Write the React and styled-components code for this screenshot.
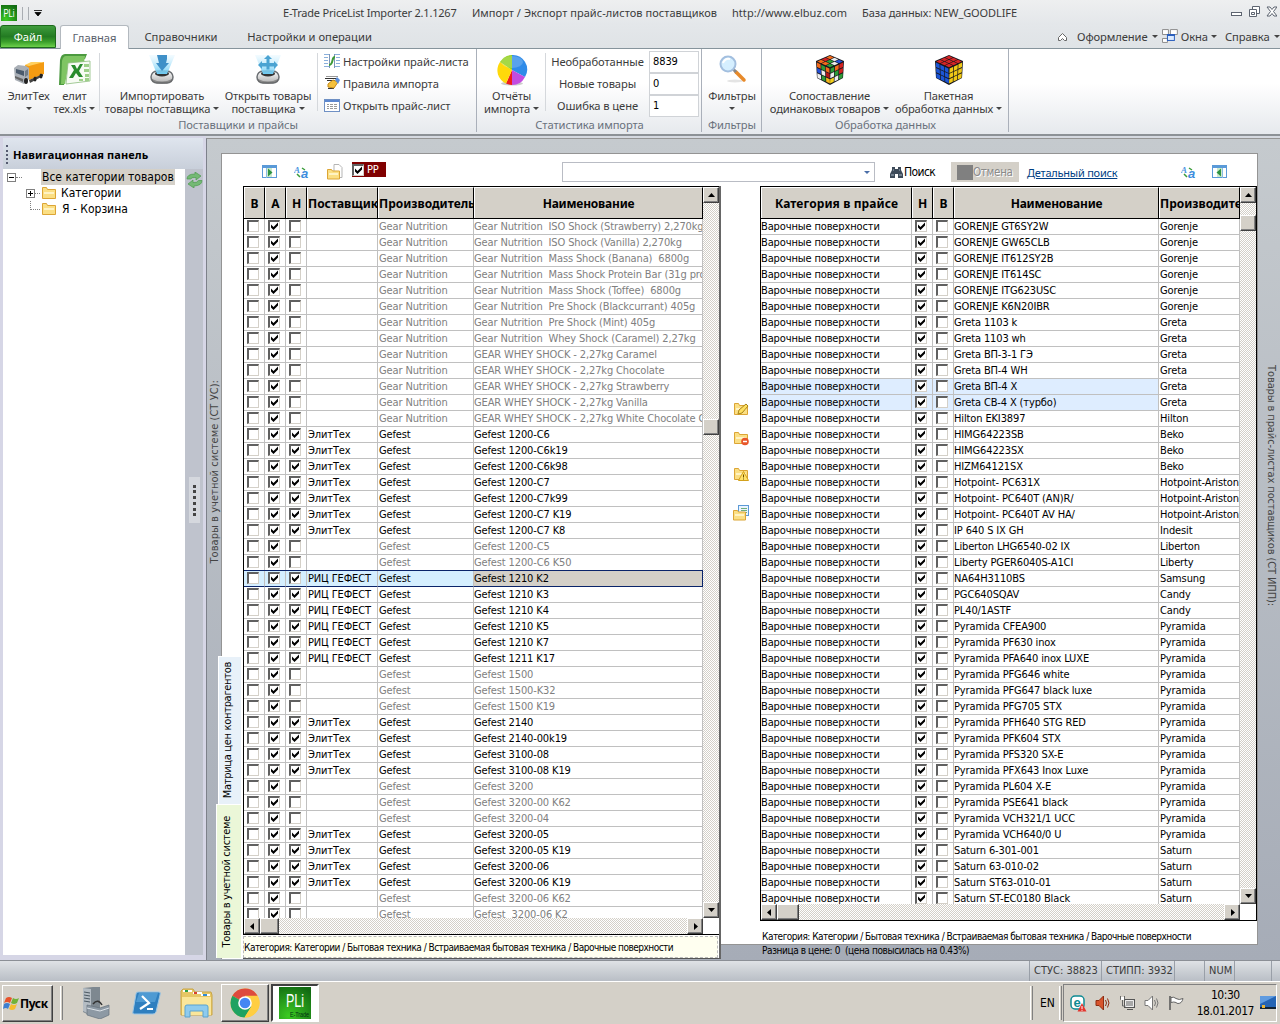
import React from 'react';
import styled, { createGlobalStyle, css } from 'styled-components';

const GlobalStyle = createGlobalStyle`
  * {
    box-sizing: border-box;
  }

  body {
    margin: 0;
    overflow: hidden;
  }
`;

const ui = "'Noto Sans', 'Open Sans', sans-serif";
const tahoma = "'DejaVu Sans Condensed', 'DejaVu Sans', sans-serif";

const Window = styled.div`
  background: #d4d0c8;
  color: #3b3b3b;
  display: flex;
  flex-direction: column;
  font-family: ${ui};
  font-size: 11.2px;
  height: 1024px;
  letter-spacing: -0.1px;
  white-space: pre;
  width: 1280px;
`;

/* ---------- title and tabs ---------- */

const TitleBar = styled.header`
  align-items: center;
  background: linear-gradient(#eeeff0, #e4e7ea);
  display: flex;
  flex: 0 0 24px;
  padding: 0 3px 0 1px;
`;

const QuickAccess = styled.div`
  align-items: center;
  display: flex;
  gap: 5px;
  padding-top: 2px;
  width: 282px;
`;

const Bar = styled.i`
  background: #a9adb2;
  height: 13px;
  width: 1px;
`;

const TitleText = styled.span`
  flex: none;
  font-size: 11px;
  letter-spacing: ${(p) => p.$spacing || 0}px;
  width: ${(p) => p.$width}px;
`;

const WindowButtons = styled.div`
  display: flex;
  gap: 6px;
  margin-left: auto;
`;

const TabBar = styled.nav`
  align-items: flex-end;
  background: linear-gradient(#e4e7ea, #dfe3e6);
  border-bottom: 1px solid #86949c;
  display: flex;
  flex: 0 0 25px;
`;

const FileTab = styled.div`
  background: linear-gradient(#3f9c3d, #237b22 50%, #3a9f2b 75%, #6cd14b);
  border: 1px solid #1d6a1c;
  border-radius: 3px 3px 0 0;
  color: #fff;
  height: 23px;
  line-height: 22px;
  text-align: center;
  width: 56px;
`;

const Tab = styled.div`
  height: 23px;
  letter-spacing: 0;
  line-height: 23px;
  margin-left: ${(p) => p.$gap}px;
  text-align: center;
  width: ${(p) => p.$width}px;
  ${(p) =>
    p.$active &&
    css`
      background: #fff;
      border: 1px solid #b3b9bf;
      border-bottom: 0;
      border-radius: 3px 3px 0 0;
      color: #5a626c;
      height: 24px;
      margin-bottom: -1px;
    `}
`;

const TabMenu = styled.div`
  align-items: center;
  display: flex;
  height: 23px;
  margin-left: auto;
  padding-right: 2px;
`;

const MenuItem = styled.span`
  align-items: center;
  display: flex;
  gap: ${(p) => p.$gap || 4}px;
  justify-content: space-between;
  margin-left: ${(p) => p.$left}px;
  width: ${(p) => p.$width}px;
`;

const Caret = styled.i`
  border: solid transparent;
  border-top-color: #444;
  border-width: 3.5px 3px 0;
  display: inline-block;
  vertical-align: middle;
`;

/* ---------- ribbon ---------- */

const Ribbon = styled.section`
  background: linear-gradient(#fff 40%, #e6e9ed);
  border-bottom: 2px solid #8c9196;
  display: flex;
  flex: 0 0 87px;
  min-height: 0;
`;

const Group = styled.div`
  border-right: 1px solid #aab0ba;
  display: flex;
  flex-direction: column;
  margin: 0 1px 2px 0;
  width: ${(p) => p.$width}px;
`;

const GroupBody = styled.div`
  display: flex;
  flex: 0 0 67px;
  min-height: 0;
  padding-left: ${(p) => p.$left || 0}px;
`;

const GroupLabel = styled.div`
  color: #69717c;
  height: 16px;
  line-height: 18px;
  text-align: center;
`;

const BigButton = styled.div`
  align-items: center;
  display: flex;
  flex: none;
  flex-direction: column;
  line-height: 13px;
  padding-top: 5px;
  text-align: center;
  width: ${(p) => p.$width}px;

  svg {
    height: 32px;
    margin-bottom: 3px;
    width: 32px;
  }
`;

const ButtonLine = styled.span`
  align-items: center;
  display: flex;
  gap: 3px;
  height: 13px;
  letter-spacing: -0.15px;
`;

const Divider = styled.i`
  background: #d5d8dc;
  height: 58px;
  margin: 4px ${(p) => p.$right || 0}px 0 ${(p) => p.$left || 0}px;
  width: 1px;
`;

const SmallButtons = styled.div`
  display: flex;
  flex-direction: column;
  padding-top: 1px;
`;

const SmallButton = styled.div`
  align-items: center;
  display: flex;
  flex: none;
  gap: 3px;
  height: 22px;
`;

const StatLabels = styled.div`
  line-height: 22px;
  padding-top: 2px;
  text-align: center;
  width: 103px;
`;

const StatFields = styled.div`
  padding-top: 2px;
`;

const StatField = styled.div`
  background: #fff;
  border: 1px solid #d0d3d7;
  color: #000;
  font: 11px/19px ${tahoma};
  height: 22px;
  padding-left: 3px;
  width: 50px;
`;

/* ---------- navigation ---------- */

const Content = styled.main`
  background: #d5d9e0;
  display: flex;
  flex: 0 0 824px;
`;

const NavPanel = styled.aside`
  background: #d6d6e6;
  display: flex;
  flex-direction: column;
  padding: 2px 3px 5px;
  width: 206px;
`;

const NavHeader = styled.div`
  align-items: center;
  background: linear-gradient(#dfe5ee, #c8cfda);
  color: #000;
  display: flex;
  flex: 0 0 31px;
  font: bold 11px ${ui};
  gap: 5px;
  letter-spacing: 0.1px;
  padding: 2px 0 0 3px;
`;

const Grip = styled.i`
  border-left: 2px dotted #555a70;
  height: 19px;
`;

const NavBody = styled.div`
  background: #bfc3cd;
  display: flex;
  flex: 1;
`;

const Tree = styled.div`
  background: #fff;
  color: #000;
  font: 12px/16px ${tahoma};
  width: 182px;
`;

const TreeRow = styled.div`
  align-items: center;
  display: flex;
  height: 16px;
  padding-left: ${(p) => p.$indent}px;
`;

const Expander = styled.svg`
  height: 9px;
  width: 9px;
`;

const Dots = styled.i`
  border-top: 1px dotted #808080;
  margin-right: ${(p) => p.$right}px;
  width: ${(p) => p.$width}px;
`;

const Elbow = styled.i`
  align-self: flex-start;
  border: dotted #808080;
  border-width: 0 0 1px 1px;
  height: 9px;
  margin: 0 1px 0 4px;
  width: 10px;
`;

const TreeLabel = styled.span`
  background: ${(p) => (p.$selected ? '#d4d0c8' : 'none')};
  letter-spacing: 0;
  margin-left: ${(p) => p.$left}px;
  padding: 0 1px;
`;

const NavTools = styled.div`
  align-items: center;
  display: flex;
  flex-direction: column;
  padding-top: 3px;
  width: 18px;
`;

const SplitHandle = styled.div`
  align-items: center;
  background: #d5d8de;
  display: flex;
  height: 46px;
  justify-content: center;
  margin-top: 289px;
  width: 11px;

  i {
    border-left: 3px dotted #444;
    height: 31px;
  }
`;

/* ---------- workspace ---------- */

const Workspace = styled.div`
  background: linear-gradient(#c5cace, #a6acb7);
  border-left: 1px solid #7d818a;
  border-top: 1px solid #949494;
  display: flex;
  flex: 1;
  margin-top: 2px;
`;

const SideLabel = styled.div`
  align-items: center;
  color: #444;
  display: flex;
  flex: 0 0 ${(p) => p.$width}px;
  font: 11px ${tahoma};
  letter-spacing: ${(p) => p.$spacing}px;
  padding-top: ${(p) => p.$top}px;
  writing-mode: vertical-rl;

  span {
    transform: ${(p) => (p.$up ? 'rotate(180deg)' : 'none')};
  }
`;

const Page = styled.div`
  display: flex;
  flex: 0 0 1037px;
  flex-direction: column;
  padding-top: 14px;
`;

const Tools = styled.div`
  align-items: center;
  background: #fff;
  border: 1px solid #949494;
  border-bottom: 0;
  color: #000;
  display: flex;
  flex: 0 0 33px;
  font: 12px ${tahoma};
  padding: 4px 0 0 40px;
`;

const Tool = styled.span`
  align-items: center;
  display: flex;
  flex: none;
  gap: 1px;
  height: 16px;
  letter-spacing: -0.6px;
  margin-left: ${(p) => p.$left}px;
  width: ${(p) => p.$width || 16}px;

  svg {
    flex: none;
  }
`;

const PpFlag = styled.div`
  align-items: center;
  align-self: flex-start;
  background: #800000;
  color: #fff;
  display: flex;
  font-size: 11px;
  gap: 3px;
  height: 15px;
  margin: 4px 0 0 9px;
  width: 34px;
`;

const Search = styled.div`
  align-items: center;
  background: #fff;
  border: 1px solid #b9bcc4;
  display: flex;
  flex: none;
  height: 20px;
  justify-content: flex-end;
  margin-left: 176px;
  padding-right: 4px;
  width: 313px;

  i {
    border-top-color: #4a6ea8;
  }
`;

const CancelButton = styled.div`
  align-items: center;
  background: #d4d0c8;
  color: #8a8a8a;
  display: flex;
  flex: none;
  font-size: 11.5px;
  height: 20px;
  letter-spacing: -0.3px;
  margin-left: 15px;
  padding-left: 6px;
  text-shadow: 1px 1px #fff;
  width: 68px;

  i {
    background: #808080;
    height: 15px;
    width: 16px;
  }
`;

const DetailLink = styled.a`
  color: #003f84;
  flex: none;
  font: 11px ${ui};
  letter-spacing: -0.23px;
  margin-left: 8px;
  text-decoration: underline;
  width: 154px;
`;

const Panels = styled.div`
  display: flex;
`;

const SideTabs = styled.div`
  background: #fff;
  border-left: 1px solid #949494;
  display: flex;
  flex: 0 0 22px;
  flex-direction: column;
  padding-top: 470px;
`;

const SideTab = styled.div`
  align-items: center;
  background: ${(p) => p.$color};
  border-left: 1px solid #fff;
  border-top: 1px solid #fff;
  color: #000;
  display: flex;
  flex: 0 0 ${(p) => p.$height}px;
  font: 11px ${tahoma};
  justify-content: center;
  letter-spacing: -0.3px;
  margin: 0 2px 0 ${(p) => p.$out}px;
  padding-right: ${(p) => p.$pad}px;
  writing-mode: vertical-rl;

  span {
    transform: rotate(180deg);
  }
`;

const LeftPanel = styled.div`
  background: #fff;
  border-bottom: 1px solid #555;
  border-right: 2px solid #666;
  height: 773px;
  width: 478px;
`;

const RightPanel = styled.div`
  width: 537px;
`;

const RightPage = styled.div`
  background: #fff;
  border-bottom: 1px solid #949494;
  border-right: 1px solid #949494;
  display: flex;
  height: 759px;
`;

const MidTools = styled.div`
  align-items: center;
  display: flex;
  flex-direction: column;
  flex: 0 0 39px;
  padding-top: 215px;

  svg {
    margin-bottom: 13px;
  }

  svg:nth-child(n + 2) {
    margin-bottom: 20px;
  }

  svg:nth-child(3) {
    margin-bottom: 23px;
  }
`;

const Grid = styled.div`
  border: solid #000;
  border-width: 1px ${(p) => p.$right}px 1px 1px;
  color: #000;
  display: flex;
  flex-direction: column;
  font: 11px/15px ${tahoma};
  height: ${(p) => p.$height}px;
  letter-spacing: -0.13px;
  width: ${(p) => p.$width}px;
`;

const GridMain = styled.div`
  display: flex;
  flex: 1;
  min-height: 0;
`;

const GridRows = styled.div`
  flex: none;
  overflow: hidden;
`;

const HeadRow = styled.div`
  border-bottom: 1px solid #000;
  display: grid;
  grid-template-columns: ${(p) => p.$cols};
  height: 32px;
`;

const HeadCell = styled.div`
  background: #d4d0c8;
  border-left: 1px solid #fff;
  border-right: 1px solid #000;
  border-top: 1px solid #fff;
  display: flex;
  font: bold 12px ${ui};
  justify-content: ${(p) => (p.$clip ? 'flex-start' : 'center')};
  letter-spacing: ${(p) => p.$spacing || 0}px;
  line-height: 31px;
  overflow: hidden;
`;

const Row = styled.div`
  background: ${(p) => p.$bg || '#fff'};
  color: ${(p) => (p.$muted ? '#808080' : '#000')};
  display: grid;
  grid-template-columns: ${(p) => p.$cols};
  height: 16px;
  ${(p) =>
    p.$current &&
    css`
      background: linear-gradient(to right, #d5efff 230px, #d4d0c8 230px);
      box-shadow: inset 0 -1px #0a246a, 0 -1px #0a246a, inset -1px 0 #0a246a;
      position: relative;
    `}
`;

const Cell = styled.div`
  border-bottom: 1px solid ${(p) => (p.$current ? '#0a246a' : '#c0c0c0')};
  border-right: 1px solid #c0c0c0;
  overflow: hidden;
  padding-left: ${(p) => p.$pad || 0}px;

  &:last-child {
    border-right-color: ${(p) => (p.$current ? '#0a246a' : '#c0c0c0')};
  }
`;

const Box = styled.i`
  background: #fff;
  border: solid;
  border-color: #606060 #d4d0c8 #d4d0c8 #606060;
  border-width: 2px 1px 1px 2px;
  display: block;
  flex: none;
  height: 12px;
  margin: ${(p) => p.$margin || '0'};
  width: 12px;

  svg {
    display: block;
  }
`;

const track = css`
  background: repeating-conic-gradient(#fff 0 25%, #d4d0c8 0 50%) 0 0 / 2px 2px;
`;

const VScroll = styled.div`
  ${track}
  display: flex;
  flex: 0 0 16px;
  flex-direction: column;
`;

const HScroll = styled.div`
  ${track}
  display: flex;
  flex: 0 0 16px;
  width: ${(p) => p.$width}px;
`;

const ScrollPart = styled.div`
  align-items: center;
  background: #d4d0c8;
  border: 1px solid;
  border-color: #fff #404040 #404040 #fff;
  box-shadow: inset -1px -1px #808080;
  display: flex;
  flex: 0 0 ${(p) => p.$size || 16}px;
  justify-content: center;
  margin-left: ${(p) => p.$left || 0};
  margin-top: ${(p) => p.$top || 0};
`;

const CategoryPath = styled.div`
  color: #000;
  font: 10px/14px ${tahoma};
  letter-spacing: -0.51px;
  padding: 9px 0 0 2px;
`;

const LeftFooter = styled(CategoryPath)`
  background: #fffff0;
  border: 1px dashed #bbb;
  height: 22px;
  line-height: 21px;
  margin-top: 1px;
  padding: 0;
  width: 475px;
`;

const PriceChange = styled(CategoryPath)`
  letter-spacing: -0.4px;
  line-height: 11px;
  padding: 0 0 0 41px;
`;

/* ---------- status and taskbar ---------- */

const StatusBar = styled.footer`
  background: linear-gradient(#dfe2e6, #cfd3d8 40%, #b9bec6);
  border-top: 1px solid #8b8f96;
  display: flex;
  flex: 0 0 21px;
  font: 11px/20px ${tahoma};
  justify-content: flex-end;
  padding-right: 4px;
`;

const StatusItem = styled.span`
  border-left: 1px solid #999fa8;
  letter-spacing: 0;
  padding-left: 4px;
  width: ${(p) => p.$width}px;
`;

const Taskbar = styled.div`
  align-items: center;
  background: #d4d0c8;
  border-top: 1px solid #fff;
  color: #000;
  display: flex;
  flex: 1;
  font: 12px/16px ${tahoma};
  padding: 0 2px;
`;

const StartButton = styled.div`
  align-items: center;
  border: 1px solid;
  border-color: #fff #404040 #404040 #fff;
  box-shadow: inset -1px -1px #808080;
  display: flex;
  font: bold 12px ${ui};
  height: 37px;
  letter-spacing: -0.4px;
  width: 51px;
`;

const TaskSeparator = styled.i`
  border-left: 1px solid #fff;
  border-right: 1px solid #808080;
  height: 34px;
  margin: 0 ${(p) => p.$right}px 0 ${(p) => p.$left}px;
  width: 3px;
`;

const TaskItem = styled.div`
  align-items: center;
  display: flex;
  height: 38px;
  justify-content: center;
  width: 50px;
  ${(p) =>
    p.$open &&
    css`
      border: 1px solid;
      border-color: #fff #404040 #404040 #fff;
      box-shadow: inset -1px -1px #808080;
      width: 48px;
      margin-right: 2px;
    `}
  ${(p) =>
    p.$pressed &&
    css`
      background: #fff;
      border: 2px solid;
      border-color: #404040 #fff #fff #404040;
      width: 48px;
    `}
`;

const Tray = styled.div`
  align-items: center;
  border: 1px solid;
  border-color: #808080 #fff #fff #808080;
  display: flex;
  gap: 8px;
  height: 38px;
  padding-left: 6px;
  width: 214px;

  svg {
    flex: none;
  }
`;

const Clock = styled.div`
  letter-spacing: -0.45px;
  margin: 0 -2px 0 5px;
  text-align: center;
  width: 58px;
`;

/* ---------- icons ---------- */

const PliIcon = ({ size }) => (
  <svg width={size} height={size} viewBox="0 0 32 32">
    <defs>
      <radialGradient id="pli" cx="0.3" cy="0.9" r="1">
        <stop offset="0" stopColor="#3ccb22" />
        <stop offset="1" stopColor="#126b12" />
      </radialGradient>
    </defs>
    <rect width="32" height="32" fill="url(#pli)" />
    <text
      x={size > 20 ? 7 : 5}
      y={size > 20 ? 20 : 24}
      fill="#fff"
      fontFamily="Liberation Sans"
      fontSize={size > 20 ? 18 : 21}
      textLength={size > 20 ? 18 : 22}
      lengthAdjust="spacingAndGlyphs"
    >
      PLi
    </text>
    {size > 20 && (
      <text x="11" y="30" fill="#031" fontFamily="Liberation Sans" fontSize="7" textLength="19" lengthAdjust="spacingAndGlyphs">
        E-Trade
      </text>
    )}
  </svg>
);

const TruckIcon = () => (
  <svg viewBox="0 0 32 32">
    <path d="M12 11l19-3v12l-15 6z" fill="#f49b12" />
    <path d="M12 11l6-3h13l-15 4z" fill="#ffd060" />
    <path d="M1 14l4-3 8 1 3 2v11l-5 5-9-4z" fill="#a9afb6" />
    <path d="M3 15l8 2v5l-8-3z" fill="#4a5a6c" />
    <path d="M12 17l3-2v6l-3 2z" fill="#707c88" />
    <path d="M2 22l8 3v3l-8-4z" fill="#666" />
    <path d="M16 26l14-6v2l-13 7z" fill="#444" />
    <ellipse cx="13" cy="27" rx="2" ry="3" fill="#222" />
    <ellipse cx="22" cy="25" rx="1.500" ry="2.500" fill="#222" />
    <ellipse cx="28" cy="22" rx="1.500" ry="2.500" fill="#222" />
  </svg>
);

const ExcelIcon = () => (
  <svg viewBox="0 0 32 32">
    <path d="M6 0h22l-2 5H9L5 31H0L1 6q1-6 5-6z" fill="#4c9a40" />
    <path d="M7 2h19l-1 7H10L6 30H2L3 7q1-5 4-5z" fill="#7fc563" />
    <path d="M9 9l22-2v20l-24 3z" fill="#f7fbf4" stroke="#8cbc7c" strokeWidth="0.800" />
    <path d="M12 11h4l2 4 3-5h3l-4 7 4 6h-4l-3-4-3 5h-4l5-8z" fill="#288b2c" />
    <path d="M25 10h5v3h-5zM25 15h5v3h-5zM26 20h4v3h-4zM20 25h4v2h-4zM26 24h4v3h-4z" fill="#9ed08a" />
  </svg>
);

const DeviceIcon = ({ up }) => (
  <svg viewBox="0 0 32 32">
    <defs>
      <linearGradient id="beam" x2="0" y2="1">
        <stop offset="0" stopColor="#cdefff" stopOpacity="0.25" />
        <stop offset="1" stopColor="#6fcdf5" />
      </linearGradient>
      <linearGradient id="metal" x2="0" y2="1">
        <stop offset="0" stopColor="#fff" />
        <stop offset="1" stopColor="#b0b0b0" />
      </linearGradient>
    </defs>
    <rect x="5" y="17" width="22" height="12" rx="6" fill="url(#metal)" stroke="#6b6f73" strokeWidth="1.500" />
    <path d="M6 25q10 5 20 0v3q-10 4-20 0z" fill="#666" opacity="0.6" />
    <ellipse cx="16" cy="19.500" rx="7" ry="3" fill="#333" />
    <path d="M3 1h26l-8 19H11z" fill="url(#beam)" />
    {up ? (
      <path d="M16 1l4 4h-2.500v4H22V7l4 4-4 4v-2.500h-4.500v3h-3v-3H10V15l-4-4 4-4v2h4.500V5H12z" fill="#4aa3d2" />
    ) : (
      <path d="M11 1h10v4l-1 4h3l-7 8-6-8h3z" fill="#3f90c8" />
    )}
  </svg>
);

const PieIcon = () => (
  <svg viewBox="0 0 32 32">
    <ellipse cx="16" cy="29.500" rx="11" ry="2" fill="#ccc" />
    <path d="M16 16V1A14.500 14.500 0 0 1 29 23z" fill="#2f8be8" />
    <path d="M16 16l13 7a14.500 14.500 0 0 1-13 8z" fill="#c34be0" />
    <path d="M16 16v15a14 14 0 0 1-6-1.500z" fill="#ee1c1c" />
    <path d="M16 16l-6 13.500A14.500 14.500 0 0 1 4 8z" fill="#ffd90a" />
    <path d="M16 16L4 8A14.500 14.500 0 0 1 16 1z" fill="#8fcf18" />
    <ellipse cx="16" cy="8" rx="11" ry="6" fill="#fff" opacity="0.2" />
  </svg>
);

const LensIcon = () => (
  <svg viewBox="0 0 32 32">
    <ellipse cx="19" cy="27" rx="8" ry="1.500" fill="#e4e4e4" />
    <path d="M20 18l8 8" stroke="#e78a2a" strokeWidth="3.500" strokeLinecap="round" />
    <path d="M17 15l3 3" stroke="#888" strokeWidth="3" />
    <circle cx="12" cy="10" r="7.500" fill="#d5efff" stroke="#a3bfdf" strokeWidth="2" />
    <path d="M7 9q2-5 7-4" stroke="#fff" strokeWidth="2" fill="none" />
  </svg>
);

const mixed = ['#f26a1b', '#eee', '#2450d8', '#d32222', '#2d9b38', '#eee', '#f26a1b', '#f26a1b', '#2d9b38'];
const mixedLeft = ['#f26a1b', '#2d9b38', '#f26a1b', '#2450d8', '#eee', '#b31818', '#eee', '#2d9b38', '#f4b81b'];
const mixedRight = ['#2d9b38', '#f26a1b', '#d32222', '#eee', '#2d9b38', '#d32222', '#f4d01b', '#eee', '#2d9b38'];

const CubeIcon = ({ top, left, right }) => {
  const cells = [0, 1, 2, 3, 4, 5, 6, 7, 8];
  const color = (side, i) => (Array.isArray(side) ? side[i] : side);
  return (
    <svg viewBox="0 0 32 32">
      <path d="M16 1l14 6-1 17-13 7-13-7L2 7z" fill="#16161c" />
      <g transform="matrix(4.5 2 -4.500 2 16 1.500)">
        {cells.map((i) => (
          <rect key={i} x={(i % 3) + 0.08} y={Math.floor(i / 3) + 0.08} width="0.84" height="0.84" fill={color(top, i)} />
        ))}
      </g>
      <g transform="matrix(4.400 2.100 0.200 5.300 2.500 8)">
        {cells.map((i) => (
          <rect key={i} x={(i % 3) + 0.08} y={Math.floor(i / 3) + 0.08} width="0.84" height="0.84" fill={color(left, i)} />
        ))}
      </g>
      <g transform="matrix(4.400 -2.100 -0.200 5.300 16.300 14.300)">
        {cells.map((i) => (
          <rect key={i} x={(i % 3) + 0.08} y={Math.floor(i / 3) + 0.08} width="0.84" height="0.84" fill={color(right, i)} />
        ))}
      </g>
    </svg>
  );
};

const MappingIcon = () => (
  <svg width="16" height="16" viewBox="0 0 16 16">
    <path d="M0 1.500h5M0 4.500h4M0 7.500h4M0 10.500h4M0 13.500h5M11 1.500h5M12 4.500h4M12 7.500h4M12 10.500h4M11 13.500h5" stroke="#8ab0dc" />
    <path d="M5.500 1v14M10.500 1v14" stroke="#7b95b8" />
    <path d="M5 12c5 0 2-8 6-8" stroke="#3c9a35" strokeWidth="2" fill="none" />
  </svg>
);

const RulesIcon = () => (
  <svg width="16" height="16" viewBox="0 0 16 16">
    <path d="M1 3.500h13M3 5.500h8M4 13.500h6" stroke="#333" />
    <path d="M2 1.500h12" stroke="#999" />
    <path d="M4 9l5-4 5 2-4 6-6-1z" fill="#f5c13c" stroke="#c58a18" />
    <path d="M11 5l2-3 3 3-2 4z" fill="#5d8fd9" />
  </svg>
);

const ListIcon = () => (
  <svg width="16" height="16" viewBox="0 0 16 16">
    <rect x="0.500" y="2.500" width="15" height="12" fill="#fff" stroke="#6f90c4" />
    <path d="M1 4h14" stroke="#5c87cf" strokeWidth="2" />
    <path d="M3 7.500h2m1 0h3m1 0h3M3 9.500h2m1 0h3m1 0h3M3 11.500h2m1 0h3m1 0h3" stroke="#999" />
  </svg>
);

const PanelIcon = ({ flip }) => (
  <svg width="16" height="14" viewBox="0 0 16 14" transform={flip ? 'scale(-1 1)' : undefined}>
    <rect x="0.500" y="0.500" width="14" height="12" fill="#fff" stroke="#5a9ad8" />
    <path d="M1 2h13" stroke="#5a9ad8" strokeWidth="2" />
    <path d="M4.500 3v10" stroke="#8bbbe4" />
    <rect x="5" y="3" width="5" height="9" fill="#cdebcd" />
    <path d="M6 3.500l4.500 4-4.500 4z" fill="#2f9344" />
  </svg>
);

const LettersIcon = () => (
  <svg width="16" height="16" viewBox="0 0 16 16">
    <text x="0" y="9" fontFamily="Liberation Serif" fontStyle="italic" fontWeight="bold" fontSize="9" fill="#4b96e0">A</text>
    <text x="7" y="14" fontFamily="Liberation Sans" fontStyle="italic" fontWeight="bold" fontSize="13" fill="#3c8ddd">a</text>
    <path d="M3 10l3 3M8 4l3 2" stroke="#3a9c3a" strokeWidth="1.500" />
  </svg>
);

const FolderIcon = ({ mark }) => {
  const low = mark === 'page' || mark === 'sheet';
  return (
    <svg width="16" height="16" viewBox="0 0 16 16">
      {mark === 'page' && <path d="M7 0.500h5l3 3v10H7z" fill="#fff" stroke="#b5b5b5" />}
      {mark === 'sheet' && (
        <g>
          <rect x="5.500" y="0.500" width="10" height="10" fill="#eaf4ff" stroke="#5c9ad6" />
          <path d="M8 3.500h6M8 5.500h6M8 7.500h6" stroke="#6fae7c" />
        </g>
      )}
      <path d={low ? 'M0.500 5.500h4l1 1.500h7v8h-12z' : 'M1.500 2.500h4l1 2h8v9h-13z'} fill="#fbdf84" stroke="#dca535" />
      <path d={low ? 'M2 9h9v2H2z' : 'M3 7h10v2H3z'} fill="#fff3c4" />
      {mark === 'edit' && <path d="M5 13l1-4 7-6 2 2-6 7z" fill="#ffe060" stroke="#a88419" />}
      {mark === 'minus' && (
        <g>
          <circle cx="12" cy="11.500" r="3.800" fill="#e8562a" />
          <path d="M10 11.500h4" stroke="#fff" strokeWidth="1.500" />
        </g>
      )}
      {mark === 'warn' && (
        <g>
          <path d="M10.500 5.500l5 9h-10z" fill="#ffe36c" stroke="#d3a11c" />
          <path d="M10.500 8.500v3m0 1v1" stroke="#6b4d00" />
        </g>
      )}
    </svg>
  );
};

const RefreshIcon = () => (
  <svg width="17" height="16" viewBox="0 0 17 16">
    <path d="M1 7q0-5 8-5V0l6 4-5 4V5.500Q6 5 4.500 7z" fill="#74b974" stroke="#4d9a4f" strokeWidth="0.700" />
    <path d="M16 8.500q0 5-8 5.500v2l-6-4 5-4v2.500q4 .5 5.500-2z" fill="#74b974" stroke="#4d9a4f" strokeWidth="0.700" />
  </svg>
);

const BinocularsIcon = () => (
  <svg width="13" height="13" viewBox="0 0 13 13">
    <path d="M2 1h3v2h3V1h3v3l2 4v4H8V8H5v4H0V8l2-4z" fill="#3d4a59" />
    <path d="M1 9h3M9 9h3M3 4h1M9 4h1" stroke="#a8b7c6" />
  </svg>
);

const WindowsIcon = () => (
  <svg width="16" height="15" viewBox="0 0 16 15">
    <path d="M0.500 0.500h6v5h-6zM8.500 0.500h7v5h-7zM0.500 9.500h5v4h-5z" fill="#fff" stroke="#8d8d8d" />
    <rect x="5.500" y="5.500" width="7" height="6" fill="#dcebff" stroke="#2a5fbd" />
    <path d="M5 6h8" stroke="#2a5fbd" strokeWidth="2" />
  </svg>
);

const Arrow = ({ dir }) => {
  const shapes = {
    up: 'M0 5h7L3.500 1z',
    down: 'M0 1h7L3.500 5z',
    left: 'M5 0v7L1 3.500z',
    right: 'M2 0v7l4-3.500z',
  };
  return (
    <svg width="7" height="7" viewBox="0 0 7 7">
      <path d={shapes[dir]} fill="#000" />
    </svg>
  );
};

const StartLogo = () => (
  <svg width="17" height="17" viewBox="0 0 17 17">
    <path d="M3 3q3-2 6 0L7 8Q4 6 1 8z" fill="#e8532a" />
    <path d="M10 3q3 2 6 0l-2 5q-3 2-6 0z" fill="#71b237" />
    <path d="M1 9q3-2 6 0l-2 5q-2-2-5 0z" fill="#3e7fd0" />
    <path d="M8 9q3 2 6 0l-2 5q-3 2-6 0z" fill="#f6bd2c" />
  </svg>
);

const ServerIcon = () => (
  <svg width="30" height="32" viewBox="0 0 30 32">
    <path d="M2 1l10-1h7v25l-9 4-8-4z" fill="#7e8890" />
    <path d="M2 1l8 1v26l-8-4z" fill="#b4bcc3" />
    <path d="M3 5l6 1M3 8l6 1M3 11l6 1M3 14l6 1" stroke="#4b5862" />
    <path d="M12 17q5-6 9 1" fill="none" stroke="#333" strokeWidth="1.500" />
    <path d="M6 18l13 3 9-3v10l-9 4-13-4z" fill="#8d99a4" stroke="#66717c" strokeWidth="0.700" />
    <path d="M6 21l13 3 9-3" stroke="#dce2e8" fill="none" />
  </svg>
);

const ShellIcon = () => (
  <svg width="29" height="24" viewBox="0 0 29 24">
    <path d="M6 1h21q2 0 1 3l-4 17q-1 2-3 2H2q-2 0-1-3L4 3q0-2 2-2z" fill="#2f7fbf" stroke="#9cc7e6" />
    <path d="M7 2h19l-3 9H4z" fill="#5ba5dc" opacity="0.700" />
    <path d="M10 5l7 7-9 6M15 18h6" fill="none" stroke="#fff" strokeWidth="2.200" />
  </svg>
);

const ExplorerIcon = () => (
  <svg width="33" height="30" viewBox="0 0 33 30">
    <path d="M1 3l2-2h10l2 3h16l1 3v20H1z" fill="#e7c765" stroke="#c9a544" />
    <path d="M3 3h9M13 5h9M21 7h9" stroke="#fff" strokeWidth="2" />
    <path d="M5 3h3" stroke="#2b9e45" strokeWidth="2" />
    <path d="M14 5h3" stroke="#d8402e" strokeWidth="2" />
    <path d="M23 7h4" stroke="#2f8bd4" strokeWidth="2" />
    <path d="M2 9h29v18H2z" fill="#fae69a" />
    <path d="M5 29V19q0-2 2-2h19q2 0 2 2v10h-5v-6H10v6z" fill="#8ecbee" stroke="#5aa3cf" />
  </svg>
);

const ChromeIcon = () => (
  <svg width="30" height="30" viewBox="0 0 30 30">
    <circle cx="15" cy="15" r="14.500" fill="#ffce42" />
    <path d="M15 15L2.440 7.750A14.500 14.500 0 0 1 27.560 7.750H15z" fill="#dd4b3e" />
    <path d="M15 15l-12.560-7.250A14.500 14.500 0 0 0 14.500 29.500L21.300 18.600z" fill="#1fa261" />
    <path d="M15 8h12.700a14.500 14.500 0 0 1-13.200 21.500l7-11z" fill="#ffce42" />
    <circle cx="15" cy="15" r="6.800" fill="#fff" />
    <circle cx="15" cy="15" r="5.300" fill="#4587f3" />
  </svg>
);

const EsetIcon = () => (
  <svg width="17" height="17" viewBox="0 0 17 17">
    <rect x="1" y="1" width="13" height="13" rx="4" fill="#fff" stroke="#0e8a93" strokeWidth="1.500" />
    <text x="3.500" y="11.500" fontFamily="Liberation Sans" fontWeight="bold" fontSize="13" fill="#0e8a93">e</text>
    <path d="M12 8l4.500 8.500h-9z" fill="#e3342c" />
    <path d="M12 11v3m0 .8v1" stroke="#fff" />
  </svg>
);

const SpeakerIcon = ({ color, line }) => (
  <svg width="16" height="16" viewBox="0 0 16 16">
    <path d="M1 5.500h3L8.500 1v14L4 10.500H1z" fill={color} stroke={line} />
    <path d="M10.500 5q2 3 0 6M12.500 3.500q3 4.500 0 9" fill="none" stroke={line} />
  </svg>
);

const NetworkIcon = () => (
  <svg width="17" height="16" viewBox="0 0 17 16">
    <rect x="5.500" y="4.500" width="10" height="8" fill="#a8a8a8" stroke="#555" />
    <path d="M6.500 5.500h8v6h-8z" fill="none" stroke="#eee" />
    <path d="M8 14.500h6" stroke="#555" />
    <path d="M1.500 1v3.500h4V1M3.500 4v7h3" fill="none" stroke="#666" />
    <path d="M2 2h3v3H2z" fill="#fff" />
  </svg>
);

const FlagIcon = () => (
  <svg width="16" height="16" viewBox="0 0 16 16">
    <path d="M2 1v14" stroke="#555" strokeWidth="1.500" />
    <path d="M3 2.500q3-1 5 1 3 2 7 0-1 5-5 5-1 0-2-1-2-1-5 0z" fill="#fff" stroke="#666" />
  </svg>
);

const MonitorIcon = () => (
  <svg width="16" height="14" viewBox="0 0 16 14">
    <rect width="16" height="11" fill="#2464b4" />
    <path d="M0 0h16L0 8z" fill="#5f9be0" />
    <path d="M0 11h16v2H0z" fill="#123" />
    <path d="M2 9h3v3H2z" fill="#e7b53a" />
  </svg>
);

const Check = ({ on, margin }) => (
  <Box $margin={margin}>
    {on && (
      <svg width="9" height="9" viewBox="0 0 9 9">
        <path d="M1 2.500v3L3.500 8 8 3.500v-3L3.500 5z" fill="#000" />
      </svg>
    )}
  </Box>
);

/* ---------- data ---------- */

const gear = (name) => ['', 'Gear Nutrition', name];
const gefest = (name, supplier = '') => [supplier, 'Gefest', `Gefest ${name}`];
const ET = 'ЭлитТех';
const RG = 'РИЦ ГЕФЕСТ';

const ownGoods = [
  gear('Gear Nutrition  ISO Shock (Strawberry) 2,270kg'),
  gear('Gear Nutrition  ISO Shock (Vanilla) 2,270kg'),
  gear('Gear Nutrition  Mass Shock (Banana)  6800g'),
  gear('Gear Nutrition  Mass Shock Protein Bar (31g pro'),
  gear('Gear Nutrition  Mass Shock (Toffee)  6800g'),
  gear('Gear Nutrition  Pre Shock (Blackcurrant) 405g'),
  gear('Gear Nutrition  Pre Shock (Mint) 405g'),
  gear('Gear Nutrition  Whey Shock (Caramel) 2,27kg'),
  gear('GEAR WHEY SHOCK - 2,27kg Caramel'),
  gear('GEAR WHEY SHOCK - 2,27kg Chocolate'),
  gear('GEAR WHEY SHOCK - 2,27kg Strawberry'),
  gear('GEAR WHEY SHOCK - 2,27kg Vanilla'),
  gear('GEAR WHEY SHOCK - 2,27kg White Chocolate C'),
  gefest('1200-C6', ET),
  gefest('1200-C6k19', ET),
  gefest('1200-C6k98', ET),
  gefest('1200-C7', ET),
  gefest('1200-C7k99', ET),
  gefest('1200-C7 K19', ET),
  gefest('1200-C7 K8', ET),
  gefest('1200-C5'),
  gefest('1200-C6 K50'),
  gefest('1210 K2', RG),
  gefest('1210 K3', RG),
  gefest('1210 K4', RG),
  gefest('1210 K5', RG),
  gefest('1210 K7', RG),
  gefest('1211 K17', RG),
  gefest('1500'),
  gefest('1500-K32'),
  gefest('1500 K19'),
  gefest('2140', ET),
  gefest('2140-00k19', ET),
  gefest('3100-08', ET),
  gefest('3100-08 K19', ET),
  gefest('3200'),
  gefest('3200-00 K62'),
  gefest('3200-04'),
  gefest('3200-05', ET),
  gefest('3200-05 K19', ET),
  gefest('3200-06', ET),
  gefest('3200-06 K19', ET),
  gefest('3200-06 K62'),
  gefest(' 3200-06 K2'),
];

const currentRow = 22;

const priceGoods = [
  ['GORENJE GT6SY2W', 'Gorenje'],
  ['GORENJE GW65CLB', 'Gorenje'],
  ['GORENJE IT612SY2B', 'Gorenje'],
  ['GORENJE IT614SC', 'Gorenje'],
  ['GORENJE ITG623USC', 'Gorenje'],
  ['GORENJE K6N20IBR', 'Gorenje'],
  ['Greta 1103 k', 'Greta'],
  ['Greta 1103 wh', 'Greta'],
  ['Greta ВП-3-1 ГЭ', 'Greta'],
  ['Greta ВП-4 WH', 'Greta'],
  ['Greta ВП-4 Х', 'Greta', true],
  ['Greta СВ-4 Х (турбо)', 'Greta', true],
  ['Hilton EKI3897', 'Hilton'],
  ['HIMG64223SB', 'Beko'],
  ['HIMG64223SX', 'Beko'],
  ['HIZM64121SX', 'Beko'],
  ['Hotpoint- PC631X', 'Hotpoint-Ariston'],
  ['Hotpoint- PC640T (AN)R/', 'Hotpoint-Ariston'],
  ['Hotpoint- PC640T AV HA/', 'Hotpoint-Ariston'],
  ['IP 640 S IX GH', 'Indesit'],
  ['Liberton LHG6540-02 IX', 'Liberton'],
  ['Liberty PGER6040S-A1CI', 'Liberty'],
  ['NA64H3110BS', 'Samsung'],
  ['PGC640SQAV', 'Candy'],
  ['PL40/1ASTF', 'Candy'],
  ['Pyramida CFEA900', 'Pyramida'],
  ['Pyramida PF630 inox', 'Pyramida'],
  ['Pyramida PFA640 inox LUXE', 'Pyramida'],
  ['Pyramida PFG646 white', 'Pyramida'],
  ['Pyramida PFG647 black luxe', 'Pyramida'],
  ['Pyramida PFG705 STX', 'Pyramida'],
  ['Pyramida PFH640 STG RED', 'Pyramida'],
  ['Pyramida PFK604 STX', 'Pyramida'],
  ['Pyramida PFS320 SX-E', 'Pyramida'],
  ['Pyramida PFX643 Inox Luxe', 'Pyramida'],
  ['Pyramida PL604 X-E', 'Pyramida'],
  ['Pyramida PSE641 black', 'Pyramida'],
  ['Pyramida VCH321/1 UCC', 'Pyramida'],
  ['Pyramida VCH640/0 U', 'Pyramida'],
  ['Saturn 6-301-001', 'Saturn'],
  ['Saturn 63-010-02', 'Saturn'],
  ['Saturn ST63-010-01', 'Saturn'],
  ['Saturn ST-EC0180 Black', 'Saturn'],
];

const ownCols = '21px 21px 21px 71px 96px 229px';
const priceCols = '151px 21px 21px 205px 81px';
const path = 'Категория: Категории / Бытовая техника / Встраиваемая бытовая техника / Варочные поверхности';

function RibbonButton({ icon, lines, width, below }) {
  return (
    <BigButton $width={width}>
      {icon}
      {lines.map((line, i) => (
        <ButtonLine key={line}>
          {line}
          {!below && i === lines.length - 1 && <Caret />}
        </ButtonLine>
      ))}
      {below && (
        <ButtonLine>
          <Caret />
        </ButtonLine>
      )}
    </BigButton>
  );
}

function Header() {
  return (
    <>
      <TitleBar>
        <QuickAccess>
          <PliIcon size={16} />
          <Bar />
          <Bar />
          <svg width="8" height="6" viewBox="0 0 8 6">
            <path d="M0 .5h8M1 2.500h6L4 6z" stroke="#000" strokeWidth="0.800" />
          </svg>
        </QuickAccess>
        <TitleText $width={189} $spacing={-0.2}>
          E-Trade PriceList Importer 2.1.1267
        </TitleText>
        <TitleText $width={260} $spacing={0.05}>
          Импорт / Экспорт прайс-листов поставщиков
        </TitleText>
        <TitleText $width={130} $spacing={0.05}>
          http://www.elbuz.com
        </TitleText>
        <TitleText $width={170} $spacing={-0.1}>
          База данных: NEW_GOODLIFE
        </TitleText>
        <WindowButtons>
          <svg width="46" height="12" viewBox="0 0 46 12" fill="#fff" stroke="#5d6470">
            <rect x="0.500" y="6.500" width="10" height="3" />
            <path d="M21.500 0.500h7v7h-7z" />
            <path d="M18.500 3.500h7v7h-7zM20.500 6.500h3v2h-3z" />
            <path d="M36 1h3l2 2.500L43 1h3l-3.500 4.500L46 10h-3l-2-2.500L39 10h-3l3.500-4.500z" />
          </svg>
        </WindowButtons>
      </TitleBar>
      <TabBar>
        <FileTab>Файл</FileTab>
        <Tab $active $gap={4} $width={69}>
          Главная
        </Tab>
        <Tab $gap={10} $width={84}>
          Справочники
        </Tab>
        <Tab $gap={20} $width={133}>
          Настройки и операции
        </Tab>
        <TabMenu>
          <svg width="9" height="8" viewBox="0 0 9 8">
            <path d="M0.500 4.500l4-4 4 4v3h-2l-2-2-2 2h-2z" fill="#fff" stroke="#666" />
          </svg>
          <MenuItem $left={10} $width={80}>
            Оформление
            <Caret />
          </MenuItem>
          <MenuItem $left={5} $width={55} $gap={3}>
            <WindowsIcon />
            Окна
            <Caret />
          </MenuItem>
          <MenuItem $left={8} $width={53}>
            Справка
            <Caret />
          </MenuItem>
        </TabMenu>
      </TabBar>
      <Ribbon>
        <Group $width={477}>
          <GroupBody $left={2}>
            <RibbonButton icon={<TruckIcon />} lines={['ЭлитТех']} width={53} below />
            <RibbonButton icon={<ExcelIcon />} lines={['елит', 'тех.xls']} width={39} />
            <Divider $left={5} />
            <RibbonButton icon={<DeviceIcon />} lines={['Импортировать', 'товары поставщика']} width={124} />
            <RibbonButton icon={<DeviceIcon up />} lines={['Открыть товары', 'поставщика']} width={88} />
            <Divider $left={5} $right={6} />
            <SmallButtons>
              <SmallButton>
                <MappingIcon />
                Настройки прайс-листа
              </SmallButton>
              <SmallButton>
                <RulesIcon />
                Правила импорта
              </SmallButton>
              <SmallButton>
                <ListIcon />
                Открыть прайс-лист
              </SmallButton>
            </SmallButtons>
          </GroupBody>
          <GroupLabel>Поставщики и прайсы</GroupLabel>
        </Group>
        <Group $width={224}>
          <GroupBody>
            <RibbonButton icon={<PieIcon />} lines={['Отчёты', 'импорта']} width={67} />
            <Divider />
            <StatLabels>
              <div>Необработанные</div>
              <div>Новые товары</div>
              <div>Ошибка в цене</div>
            </StatLabels>
            <StatFields>
              <StatField>8839</StatField>
              <StatField>0</StatField>
              <StatField>1</StatField>
            </StatFields>
          </GroupBody>
          <GroupLabel>Статистика импорта</GroupLabel>
        </Group>
        <Group $width={59}>
          <GroupBody>
            <RibbonButton icon={<LensIcon />} lines={['Фильтры']} width={58} below />
          </GroupBody>
          <GroupLabel>Фильтры</GroupLabel>
        </Group>
        <Group $width={246}>
          <GroupBody $left={2}>
            <RibbonButton
              icon={<CubeIcon top={mixed} left={mixedLeft} right={mixedRight} />}
              lines={['Сопоставление', 'одинаковых товаров']}
              width={129}
            />
            <RibbonButton
              icon={<CubeIcon top="#d52525" left="#1c56d6" right="#f0c816" />}
              lines={['Пакетная', 'обработка данных']}
              width={109}
            />
          </GroupBody>
          <GroupLabel>Обработка данных</GroupLabel>
        </Group>
      </Ribbon>
    </>
  );
}

function TreeToggle({ open }) {
  return (
    <Expander viewBox="0 0 9 9">
      <rect x="0.5" y="0.5" width="8" height="8" fill="#fff" stroke="#808080" />
      <path d={open ? 'M2 4.5h5' : 'M2 4.5h5M4.5 2v5'} stroke="#000" />
    </Expander>
  );
}

function Navigation() {
  return (
    <NavPanel>
      <NavHeader>
        <Grip />
        Навигационная панель
      </NavHeader>
      <NavBody>
        <Tree>
          <TreeRow $indent={4}>
            <TreeToggle open />
            <Dots $width={6} $right={2} />
            <TreeLabel $left={17} $selected>
              Все категории товаров
            </TreeLabel>
          </TreeRow>
          <TreeRow $indent={23}>
            <TreeToggle />
            <Dots $width={5} $right={1} />
            <FolderIcon />
            <TreeLabel $left={3}>Категории</TreeLabel>
          </TreeRow>
          <TreeRow $indent={23}>
            <Elbow />
            <FolderIcon />
            <TreeLabel $left={4}>Я - Корзина</TreeLabel>
          </TreeRow>
        </Tree>
        <NavTools>
          <RefreshIcon />
          <SplitHandle>
            <i />
          </SplitHandle>
        </NavTools>
      </NavBody>
    </NavPanel>
  );
}

function OwnGrid() {
  return (
    <Grid $width={476} $height={749} $right={0}>
      <GridMain>
        <GridRows>
          <HeadRow $cols={ownCols}>
            <HeadCell>В</HeadCell>
            <HeadCell>А</HeadCell>
            <HeadCell>Н</HeadCell>
            <HeadCell $clip>Поставщик</HeadCell>
            <HeadCell $clip>Производитель</HeadCell>
            <HeadCell $spacing={-0.2}>Наименование</HeadCell>
          </HeadRow>
          {ownGoods.map(([supplier, maker, name], i) => {
            const current = i === currentRow;
            return (
              <Row key={name} $cols={ownCols} $muted={!supplier} $current={current}>
                <Cell $current={current}>
                  <Check margin="1px 0 0 3px" />
                </Cell>
                <Cell $current={current}>
                  <Check on margin="1px 0 0 3px" />
                </Cell>
                <Cell $current={current}>
                  <Check on={!!supplier} margin="1px 0 0 3px" />
                </Cell>
                <Cell $current={current} $pad={1}>
                  {supplier}
                </Cell>
                <Cell $current={current} $pad={1}>
                  {maker}
                </Cell>
                <Cell $current={current}>{name}</Cell>
              </Row>
            );
          })}
        </GridRows>
        <VScroll>
          <ScrollPart>
            <Arrow dir="up" />
          </ScrollPart>
          <ScrollPart $top="216px" />
          <ScrollPart $top="auto">
            <Arrow dir="down" />
          </ScrollPart>
        </VScroll>
      </GridMain>
      <HScroll $width={459}>
        <ScrollPart>
          <Arrow dir="left" />
        </ScrollPart>
        <ScrollPart $size={19} />
        <ScrollPart $left="auto">
          <Arrow dir="right" />
        </ScrollPart>
      </HScroll>
    </Grid>
  );
}

function PriceGrid() {
  return (
    <Grid $width={497} $height={735} $right={1}>
      <GridMain>
        <GridRows>
          <HeadRow $cols={priceCols}>
            <HeadCell $spacing={0.1}>Категория в прайсе</HeadCell>
            <HeadCell>Н</HeadCell>
            <HeadCell>В</HeadCell>
            <HeadCell $spacing={-0.2}>Наименование</HeadCell>
            <HeadCell $clip>Производитель</HeadCell>
          </HeadRow>
          {priceGoods.map(([name, maker, marked]) => (
            <Row key={name} $cols={priceCols} $bg={marked ? 'linear-gradient(to right, #deedff 398px, #fff 398px)' : undefined}>
              <Cell>Варочные поверхности</Cell>
              <Cell>
                <Check on margin="1px 0 0 3px" />
              </Cell>
              <Cell>
                <Check margin="1px 0 0 3px" />
              </Cell>
              <Cell>{name}</Cell>
              <Cell $pad={1}>{maker}</Cell>
            </Row>
          ))}
        </GridRows>
        <VScroll>
          <ScrollPart>
            <Arrow dir="up" />
          </ScrollPart>
          <ScrollPart $top="12px" />
          <ScrollPart $top="auto">
            <Arrow dir="down" />
          </ScrollPart>
        </VScroll>
      </GridMain>
      <HScroll $width={479}>
        <ScrollPart>
          <Arrow dir="left" />
        </ScrollPart>
        <ScrollPart $size={22} />
        <ScrollPart $left="auto">
          <Arrow dir="right" />
        </ScrollPart>
      </HScroll>
    </Grid>
  );
}

function App() {
  return (
    <Window>
      <GlobalStyle />
      <Header />
      <Content>
        <Navigation />
        <Workspace>
          <SideLabel $width={14} $top={241} $spacing={0.05} $up>
            <span>Товары в учетной системе (СТ УС):</span>
          </SideLabel>
          <Page>
            <Tools>
              <Tool>
                <PanelIcon />
              </Tool>
              <Tool $left={16}>
                <LettersIcon />
              </Tool>
              <Tool $left={17}>
                <FolderIcon mark="page" />
              </Tool>
              <PpFlag>
                <Check on />
                PP
              </PpFlag>
              <Search>
                <Caret />
              </Search>
              <Tool $left={15} $width={46}>
                <BinocularsIcon />
                Поиск
              </Tool>
              <CancelButton>
                <i />
                Отмена
              </CancelButton>
              <DetailLink>Детальный поиск</DetailLink>
              <Tool>
                <LettersIcon />
              </Tool>
              <Tool $left={14}>
                <PanelIcon flip />
              </Tool>
            </Tools>
            <Panels>
              <SideTabs>
                <SideTab $color="#e8f1f9" $height={148} $out={-4} $pad={5}>
                  <span>Матрица цен контрагентов</span>
                </SideTab>
                <SideTab $color="#ebf7d8" $height={154} $out={-6} $pad={5}>
                  <span>Товары в учетной системе</span>
                </SideTab>
              </SideTabs>
              <LeftPanel>
                <OwnGrid />
                <LeftFooter>{path}</LeftFooter>
              </LeftPanel>
              <RightPanel>
                <RightPage>
                  <MidTools>
                    <FolderIcon mark="edit" />
                    <FolderIcon mark="minus" />
                    <FolderIcon mark="warn" />
                    <FolderIcon mark="sheet" />
                  </MidTools>
                  <div>
                    <PriceGrid />
                    <CategoryPath>{path}</CategoryPath>
                  </div>
                </RightPage>
                <PriceChange>{'Разница в цене: 0  (цена повысилась на 0.43%)'}</PriceChange>
              </RightPanel>
            </Panels>
          </Page>
          <SideLabel $width={26} $top={226} $spacing={-0.1}>
            <span>Товары в прайс-листах поставщиков (СТ ИПП):</span>
          </SideLabel>
        </Workspace>
      </Content>
      <StatusBar>
        <StatusItem $width={72}>СТУС: 38823</StatusItem>
        <StatusItem $width={73}>СТИПП: 3932</StatusItem>
        <StatusItem $width={30} />
        <StatusItem $width={30}>NUM</StatusItem>
        <StatusItem $width={37} />
        <StatusItem $width={1} />
      </StatusBar>
      <Taskbar>
        <StartButton>
          <StartLogo />
          Пуск
        </StartButton>
        <TaskSeparator $left={7} $right={8} />
        <TaskItem>
          <ServerIcon />
        </TaskItem>
        <TaskItem>
          <ShellIcon />
        </TaskItem>
        <TaskItem>
          <ExplorerIcon />
        </TaskItem>
        <TaskItem $open>
          <ChromeIcon />
        </TaskItem>
        <TaskItem $pressed>
          <PliIcon size={32} />
        </TaskItem>
        <TaskSeparator $left={711} $right={7} />
        <span>EN</span>
        <TaskSeparator $left={4} $right={1} />
        <Tray>
          <EsetIcon />
          <SpeakerIcon color="#d8542c" line="#8e2c12" />
          <NetworkIcon />
          <SpeakerIcon color="#fff" line="#777" />
          <FlagIcon />
          <Clock>
            <div>10:30</div>
            <div>18.01.2017</div>
          </Clock>
          <MonitorIcon />
        </Tray>
      </Taskbar>
    </Window>
  );
}

export default App;
